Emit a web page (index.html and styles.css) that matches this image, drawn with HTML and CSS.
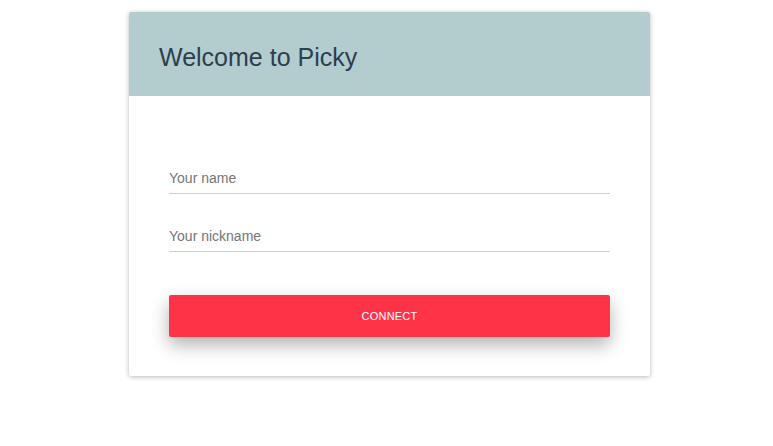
FILE: index.html
```html
<!DOCTYPE html>
<html>
<head>
<meta charset="utf-8">
<link rel="stylesheet" href="styles.css">
</head>
<body>
<div class="page">
  <div class="card">
    <div class="card-header">
      <h1 class="title">Welcome to Picky</h1>
    </div>
    <form class="card-body">
      <div class="field"><input class="input" type="text" placeholder="Your name"></div>
      <div class="field"><input class="input" type="text" placeholder="Your nickname"></div>
      <button class="btn" type="button">CONNECT</button>
    </form>
  </div>
</div>
</body>
</html>
```

FILE: styles.css
```css
html, body {
  margin: 0;
  padding: 0;
  background: #fff;
  font-family: "Liberation Sans", Arial, sans-serif;
}
.page {
  padding: 12px 0 70px 129px;
}
.card {
  width: 521px;
  background: #fff;
  border-radius: 2px;
  box-shadow: 0 1px 5px rgba(0,0,0,0.28);
}
.card-header {
  background: #b3cdce;
  height: 84px;
  padding: 0 30px;
  display: flex;
  align-items: center;
  border-radius: 2px 2px 0 0;
}
.title {
  margin: 0;
  font-weight: normal;
  font-size: 25px;
  color: #2c3e50;
  padding-top: 6px;
}
.card-body {
  margin: 0;
  padding: 68px 40px 39px;
  display: flex;
  flex-direction: column;
}
.field {
  margin-bottom: 28px;
}
.field + .field {
  margin-bottom: 43px;
}
.input {
  display: block;
  width: 100%;
  height: 30px;
  box-sizing: border-box;
  border: none;
  border-bottom: 1px solid #d0d0d0;
  padding: 0 0 1px;
  font-family: "Liberation Sans", Arial, sans-serif;
  font-size: 14px;
  color: #333;
  outline: none;
  background: transparent;
}
.input::placeholder {
  color: #757575;
}
.btn {
  height: 42px;
  border: none;
  border-radius: 2px;
  background: #ff3347;
  color: #fff;
  font-family: "Liberation Sans", Arial, sans-serif;
  font-size: 11px;
  letter-spacing: 0.2px;
  box-shadow: 0 8px 18px rgba(0,0,0,0.3);
  cursor: pointer;
}
```
